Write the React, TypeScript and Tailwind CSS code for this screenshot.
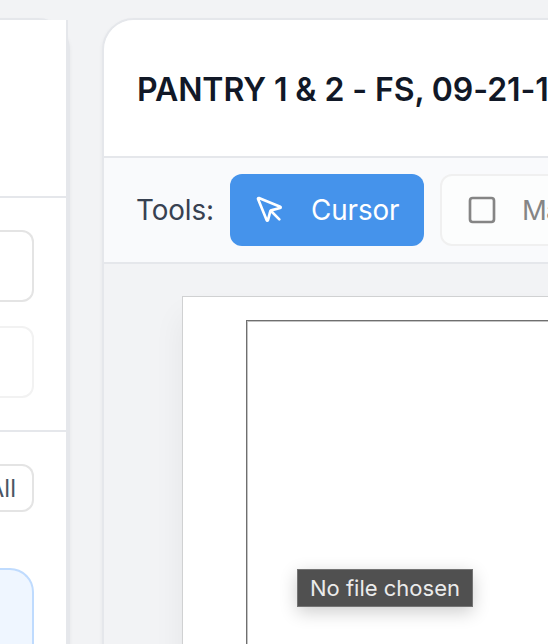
import React from "react";
import { MousePointer, Square } from "lucide-react";

function Sidebar() {
  return (
    <aside className="relative mt-[18px] h-[700px] w-[70px] shrink-0 rounded-tr-[32px] border-t-2 border-r-2 border-[#e5e7eb] bg-[#e5e7eb] shadow-[0_2px_4px_rgba(0,0,0,0.05)]">
      <div className="flex h-full w-[68px] flex-col border-r-2 border-[#e5e7eb] bg-white">
        <div className="h-[178px] shrink-0 border-b-2 border-[#e5e7eb]" />
        <div className="flex h-[234px] shrink-0 flex-col gap-6 border-b-2 border-[#e5e7eb] pt-8">
          <div className="h-[72px] w-[34px] rounded-r-xl border-2 border-l-0 border-[#e4e4e4]" />
          <div className="h-[72px] w-[34px] rounded-r-xl border-2 border-l-0 border-[#f2f2f2]" />
        </div>
        <div className="flex grow flex-col gap-14 pt-8">
          <button className="flex h-12 w-[34px] shrink-0 items-center justify-end rounded-r-xl border-2 border-l-0 border-[#e4e4e4] pt-0.5 pr-4 text-2xl text-[#4b5563]">
            All
          </button>
          <div className="w-[34px] grow rounded-tr-3xl border-t-2 border-r-2 border-[#bfdbfe] bg-[#eff6ff]" />
        </div>
      </div>
    </aside>
  );
}

function Toolbar() {
  return (
    <div className="flex h-[106px] shrink-0 items-center gap-4 border-b-2 border-[#e5e7eb] bg-[#f9fafc] pl-8">
      <span className="w-[78px] shrink-0 pt-0.5 text-[27.8px] tracking-[-0.1px] text-[#374151]">Tools:</span>
      <button className="flex h-[72px] w-[194px] shrink-0 items-center gap-[25px] rounded-xl bg-[#4593eb] pl-6 text-[27.8px] tracking-[-0.1px] text-white">
        <MousePointer size={32} strokeWidth={2} className="shrink-0" />
        <span className="pt-0.5">Cursor</span>
      </button>
      <button className="flex h-[72px] w-[220px] shrink-0 items-center gap-6 rounded-xl border-2 border-[#f0f0f0] bg-[#fcfdfd] pl-6 text-[27.5px] tracking-[-0.8px] text-[#858585]">
        <Square size={32} strokeWidth={2} className="shrink-0" />
        <span className="pt-0.5">Markup</span>
      </button>
    </div>
  );
}

export default function App() {
  return (
    <div className="flex h-[644px] w-[548px] gap-8 overflow-hidden bg-[#f2f3f5] font-['Inter',sans-serif]">
      <Sidebar />
      <main className="mt-[18px] flex h-[700px] w-[900px] shrink-0 flex-col overflow-hidden rounded-tl-[32px] border-2 border-[#e5e7eb] bg-[#f2f3f5] shadow-[0_2px_4px_rgba(0,0,0,0.05)]">
        <header className="flex h-[138px] shrink-0 items-center border-b-2 border-[#e5e7eb] bg-white pt-[3px] pl-[33px]">
          <h1 className="text-[32px] font-semibold tracking-[-0.1px] whitespace-nowrap text-[#111827]">PANTRY 1 &amp; 2 - FS, 09-21-16</h1>
        </header>
        <Toolbar />
        <div className="grow pt-8 pl-[78px]">
          <div className="relative h-[600px] w-[800px] border border-[#d0d1d2] bg-white pt-[23px] pl-[63px] shadow-[0_20px_30px_rgba(0,0,0,0.06)]">
            <div className="h-full border border-[#6f6f6f]">
              <div className="h-full border border-[#c4c4c4]" />
            </div>
            <div className="absolute top-[272px] left-[114px] flex h-[38px] w-[176px] items-center justify-center border border-[#747474] bg-[#505050] text-[22px] whitespace-nowrap text-[#ebebeb] shadow-[0_5px_18px_rgba(0,0,0,0.2)]">
              No file chosen
            </div>
          </div>
        </div>
      </main>
    </div>
  );
}
